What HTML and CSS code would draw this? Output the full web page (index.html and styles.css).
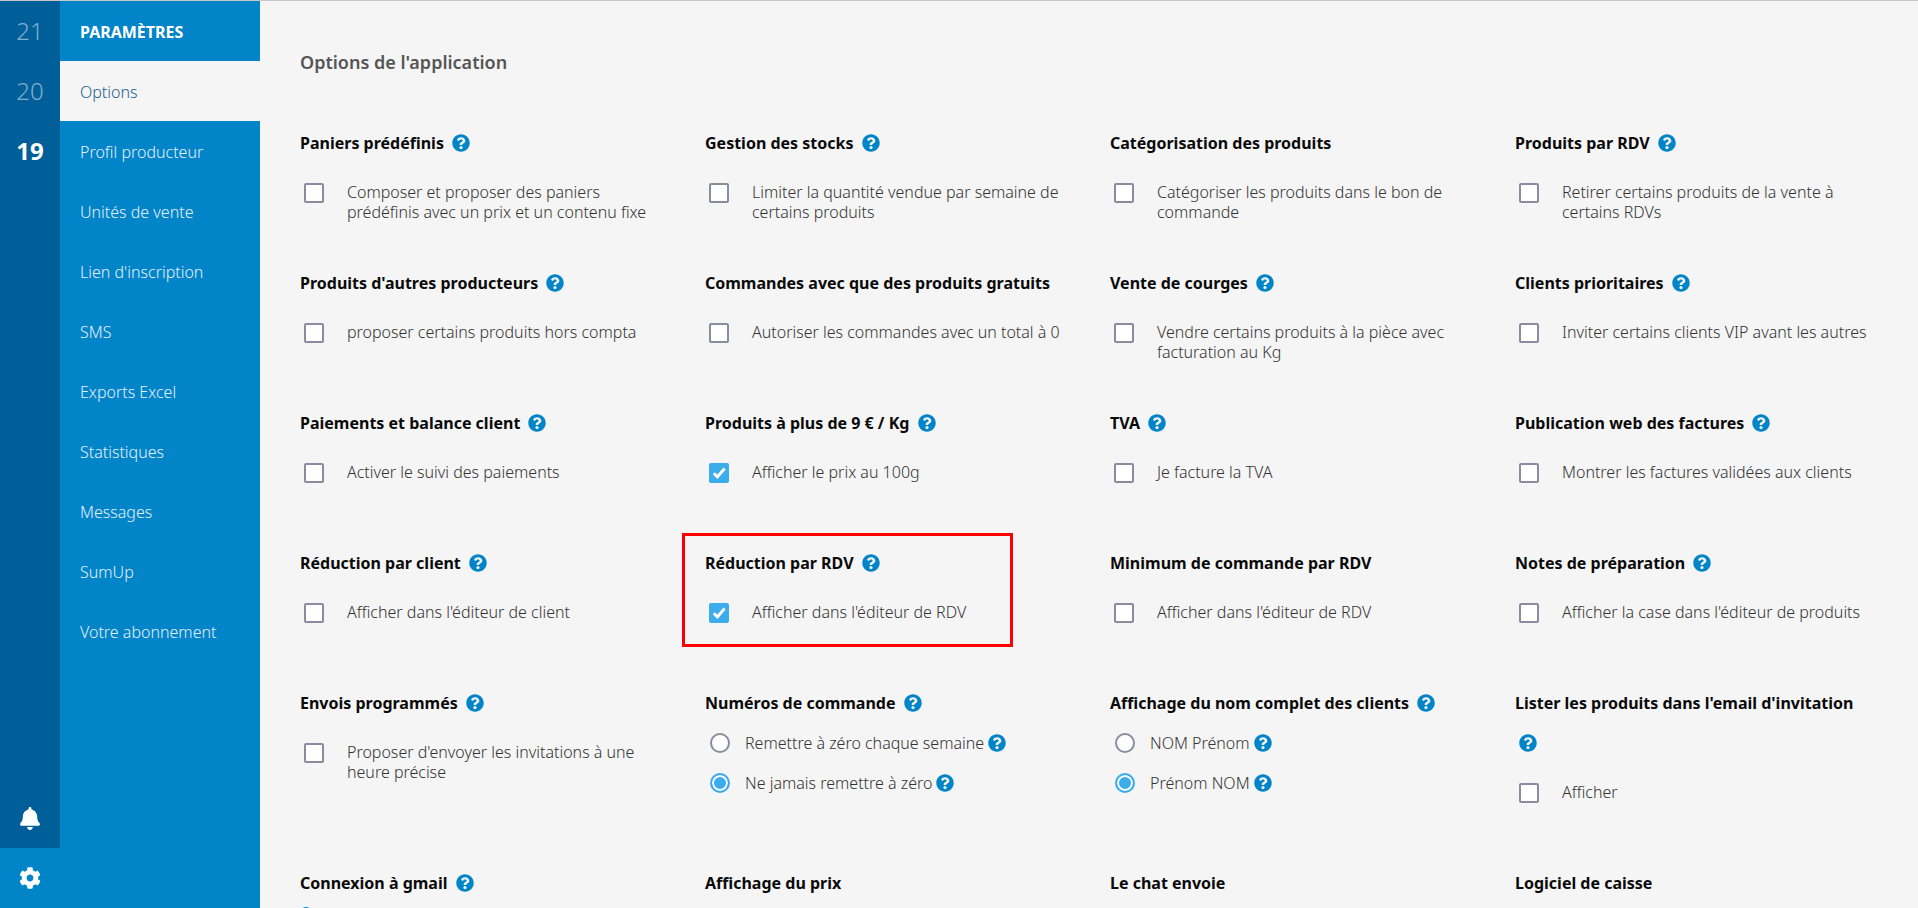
FILE: index.html
```html
<!DOCTYPE html>
<html lang="fr">
<head>
<meta charset="utf-8">
<title>Paramètres</title>
<link rel="stylesheet" href="styles.css">
</head>
<body>
<svg class="defs" width="0" height="0"><defs>
<symbol id="q" viewBox="0 0 512 512"><path fill="currentColor" d="M504 256c0 136.997-111.043 248-248 248S8 392.997 8 256C8 119.083 119.043 8 256 8s248 111.083 248 248zM262.655 90c-54.497 0-89.255 22.957-116.549 63.758-3.536 5.286-2.353 12.415 2.715 16.258l34.699 26.31c5.205 3.947 12.621 3.008 16.665-2.122 17.864-22.658 30.113-35.797 57.303-35.797 20.429 0 45.698 13.148 45.698 32.958 0 14.976-12.363 22.667-32.534 33.976C247.128 238.528 216 254.941 216 296v4c0 6.627 5.373 12 12 12h56c6.627 0 12-5.373 12-12v-1.333c0-28.462 83.186-29.647 83.186-106.667 0-58.002-60.165-102-116.531-102zM256 338c-25.365 0-46 20.635-46 46 0 25.364 20.635 46 46 46s46-20.636 46-46c0-25.365-20.635-46-46-46z"/></symbol>
</defs></svg>
<div class="app">
  <aside class="weeks">
    <div class="week">21</div>
    <div class="week">20</div>
    <div class="week current">19</div>
    <div class="spacer"></div>
    <div class="tool bell"><svg width="20" height="23" viewBox="0 0 448 512"><path fill="#fff" d="M224 512c35.320 0 63.970-28.650 63.970-64H160.030c0 35.350 28.650 64 63.970 64zm215.390-149.710c-19.320-20.760-55.470-51.990-55.470-154.290 0-77.700-54.480-139.900-127.940-155.160V32c0-17.670-14.320-32-31.980-32s-31.980 14.330-31.980 32v20.840C118.560 68.100 64.080 130.300 64.080 208c0 102.300-36.150 133.530-55.470 154.290-6 6.450-8.660 14.160-8.610 21.710.11 16.400 12.980 32 32.100 32h383.800c19.120 0 32-15.600 32.100-32 .05-7.550-2.610-15.270-8.610-21.710z"/></svg></div>
    <div class="tool gear"><svg width="22" height="22" viewBox="0 0 512 512"><path fill="#fff" d="M487.400 315.700l-42.600-24.600c4.300-23.200 4.300-47 0-70.200l42.600-24.600c4.900-2.800 7.100-8.600 5.500-14-11.100-35.600-30-67.800-54.700-94.600-3.800-4.100-10-5.100-14.800-2.300L380.800 110c-17.900-15.400-38.500-27.300-60.800-35.100V25.800c0-5.600-3.900-10.500-9.400-11.700-36.700-8.200-74.300-7.800-109.200 0-5.500 1.200-9.400 6.100-9.400 11.700V75c-22.200 7.900-42.800 19.800-60.800 35.100L88.700 85.500c-4.900-2.800-11-1.900-14.800 2.300-24.700 26.700-43.600 58.900-54.700 94.600-1.700 5.400.6 11.200 5.500 14L67.300 221c-4.300 23.200-4.300 47 0 70.200l-42.600 24.600c-4.900 2.800-7.100 8.600-5.500 14 11.100 35.600 30 67.800 54.700 94.600 3.800 4.100 10 5.100 14.800 2.300l42.600-24.600c17.900 15.400 38.500 27.300 60.800 35.100v49.200c0 5.600 3.900 10.500 9.400 11.700 36.700 8.200 74.300 7.800 109.200 0 5.500-1.200 9.400-6.100 9.400-11.700v-49.200c22.200-7.900 42.800-19.800 60.800-35.100l42.600 24.600c4.900 2.800 11 1.900 14.800-2.300 24.700-26.700 43.600-58.900 54.700-94.600 1.500-5.500-.7-11.300-5.600-14.100zM256 336c-44.100 0-80-35.900-80-80s35.900-80 80-80 80 35.900 80 80-35.900 80-80 80z"/></svg></div>
  </aside>
  <nav class="menu">
    <div class="menu-title">PARAMÈTRES</div>
    <a class="menu-item active">Options</a>
    <a class="menu-item">Profil producteur</a>
    <a class="menu-item">Unités de vente</a>
    <a class="menu-item">Lien d'inscription</a>
    <a class="menu-item">SMS</a>
    <a class="menu-item">Exports Excel</a>
    <a class="menu-item">Statistiques</a>
    <a class="menu-item">Messages</a>
    <a class="menu-item">SumUp</a>
    <a class="menu-item">Votre abonnement</a>
  </nav>
  <main class="content">
    <h1 class="page-title">Options de l'application</h1>
    <div class="grid">
      <section class="opt"><h2>Paniers prédéfinis <svg class="q"><use href="#q"/></svg></h2><label class="check"><i class="box"></i><span>Composer et proposer des paniers prédéfinis avec un prix et un contenu fixe</span></label></section>
      <section class="opt"><h2>Gestion des stocks <svg class="q"><use href="#q"/></svg></h2><label class="check"><i class="box"></i><span>Limiter la quantité vendue par semaine de certains produits</span></label></section>
      <section class="opt"><h2>Catégorisation des produits</h2><label class="check"><i class="box"></i><span>Catégoriser les produits dans le bon de commande</span></label></section>
      <section class="opt"><h2>Produits par RDV <svg class="q"><use href="#q"/></svg></h2><label class="check"><i class="box"></i><span>Retirer certains produits de la vente à certains RDVs</span></label></section>

      <section class="opt"><h2>Produits d'autres producteurs <svg class="q"><use href="#q"/></svg></h2><label class="check"><i class="box"></i><span>proposer certains produits hors compta</span></label></section>
      <section class="opt"><h2>Commandes avec que des produits gratuits</h2><label class="check"><i class="box"></i><span>Autoriser les commandes avec un total à 0</span></label></section>
      <section class="opt"><h2>Vente de courges <svg class="q"><use href="#q"/></svg></h2><label class="check"><i class="box"></i><span>Vendre certains produits à la pièce avec facturation au Kg</span></label></section>
      <section class="opt"><h2>Clients prioritaires <svg class="q"><use href="#q"/></svg></h2><label class="check"><i class="box"></i><span>Inviter certains clients VIP avant les autres</span></label></section>

      <section class="opt"><h2>Paiements et balance client <svg class="q"><use href="#q"/></svg></h2><label class="check"><i class="box"></i><span>Activer le suivi des paiements</span></label></section>
      <section class="opt"><h2>Produits à plus de 9 € / Kg <svg class="q"><use href="#q"/></svg></h2><label class="check"><i class="box on"><svg viewBox="0 0 20 20"><path d="M4.800 10.200l3.600 3.700 7.200-8.400" fill="none" stroke="#fff" stroke-width="3"/></svg></i><span>Afficher le prix au 100g</span></label></section>
      <section class="opt"><h2>TVA <svg class="q"><use href="#q"/></svg></h2><label class="check"><i class="box"></i><span>Je facture la TVA</span></label></section>
      <section class="opt"><h2>Publication web des factures <svg class="q"><use href="#q"/></svg></h2><label class="check"><i class="box"></i><span>Montrer les factures validées aux clients</span></label></section>

      <section class="opt"><h2>Réduction par client <svg class="q"><use href="#q"/></svg></h2><label class="check"><i class="box"></i><span>Afficher dans l'éditeur de client</span></label></section>
      <section class="opt highlighted"><h2>Réduction par RDV <svg class="q"><use href="#q"/></svg></h2><label class="check"><i class="box on"><svg viewBox="0 0 20 20"><path d="M4.800 10.200l3.600 3.700 7.200-8.400" fill="none" stroke="#fff" stroke-width="3"/></svg></i><span>Afficher dans l'éditeur de RDV</span></label></section>
      <section class="opt"><h2>Minimum de commande par RDV</h2><label class="check"><i class="box"></i><span>Afficher dans l'éditeur de RDV</span></label></section>
      <section class="opt"><h2>Notes de préparation <svg class="q"><use href="#q"/></svg></h2><label class="check"><i class="box"></i><span>Afficher la case dans l'éditeur de produits</span></label></section>

      <section class="opt"><h2>Envois programmés <svg class="q"><use href="#q"/></svg></h2><label class="check"><i class="box"></i><span>Proposer d'envoyer les invitations à une heure précise</span></label></section>
      <section class="opt"><h2 class="tight">Numéros de commande <svg class="q"><use href="#q"/></svg></h2><label class="radio"><i class="dot"></i><span>Remettre à zéro chaque semaine</span><svg class="q sm"><use href="#q"/></svg></label><label class="radio"><i class="dot on"></i><span>Ne jamais remettre à zéro</span><svg class="q sm"><use href="#q"/></svg></label></section>
      <section class="opt"><h2 class="tight">Affichage du nom complet des clients <svg class="q"><use href="#q"/></svg></h2><label class="radio"><i class="dot"></i><span>NOM Prénom</span><svg class="q sm"><use href="#q"/></svg></label><label class="radio"><i class="dot on"></i><span>Prénom NOM</span><svg class="q sm"><use href="#q"/></svg></label></section>
      <section class="opt"><h2>Lister les produits dans l'email d'invitation <svg class="q"><use href="#q"/></svg></h2><label class="check"><i class="box"></i><span>Afficher</span></label></section>

      <section class="opt"><h2 class="tight">Connexion à gmail <svg class="q"><use href="#q"/></svg></h2><i class="peek"></i></section>
      <section class="opt"><h2>Affichage du prix</h2></section>
      <section class="opt"><h2>Le chat envoie</h2></section>
      <section class="opt"><h2>Logiciel de caisse</h2></section>
    </div>
  </main>
</div>
</body>
</html>
```
FILE: styles.css
```css
* { box-sizing: border-box; }
html, body { margin: 0; height: 100%; overflow: hidden; }
body { font-family: "Noto Sans", "Open Sans", sans-serif; background: #f5f5f5; }
.defs { display: block; height: 0; }
.app { display: flex; height: 908px; border-top: 1px solid #c8c8c8; }
.weeks { width: 60px; flex: none; display: flex; flex-direction: column; background: #005f99; }
.week { height: 60px; padding-bottom: 2px; display: flex; align-items: center; justify-content: center; font-size: 24px; font-weight: 300; color: #7fb0cf; }
.week.current { color: #fff; font-weight: 700; }
.spacer { flex: 1; }
.tool { height: 60px; display: flex; align-items: center; justify-content: center; }
.gear { background: #0284c9; }
.menu { width: 200px; flex: none; background: #0284c9; }
.menu-title { height: 60px; padding: 2px 0 0 20px; display: flex; align-items: center; font-size: 16px; font-weight: 700; color: #fff; }
.menu-item { height: 60px; padding: 2px 0 0 20px; display: flex; align-items: center; font-size: 16px; font-weight: 300; color: #e3f1fa; }
.menu-item.active { background: #f5f5f5; color: #21608f; }
.content { flex: 1; min-width: 0; padding-left: 40px; }
.page-title { margin: 0; height: 122px; padding-top: 47px; font-size: 18px; line-height: 28px; font-weight: 600; color: #555; }
.grid { display: grid; grid-template-columns: repeat(4, 405px); grid-template-rows: 140px 140px 140px 140px 180px 140px; }
.opt { position: relative; padding-right: 47px; }
.opt h2 { margin: 0 0 19px; font-size: 16px; line-height: 40px; font-weight: 700; color: #0a0a0a; }
.opt h2.tight { margin-bottom: 0; }
.q { width: 18px; height: 18px; color: #0284c9; vertical-align: -3px; margin-left: 4px; }
.q.sm { margin-left: 4px; flex: none; }
.check { display: flex; align-items: flex-start; padding-left: 4px; font-size: 16px; line-height: 20px; font-weight: 300; color: #333; }
.check > span { margin-left: 23px; flex: 1; min-width: 0; }
.box { flex: none; width: 20px; height: 20px; border: 2px solid #8b8b9f; border-radius: 2px; background: #fff; display: block; margin-top: 1px; }
.box.on { background: #3caced; border-color: #3caced; }
.box svg { display: block; width: 20px; height: 20px; margin: -2px; }
.radio { display: flex; align-items: center; height: 40px; padding-left: 5px; font-size: 16px; font-weight: 300; color: #333; }
.radio > span { margin-left: 15px; }
.dot { flex: none; width: 20px; height: 20px; border-radius: 50%; border: 2px solid #8b8b9f; background: #fff; }
.dot.on { border-color: #3caced; background: #3caced; box-shadow: inset 0 0 0 2px #fff; }
.peek { display: block; width: 12px; height: 12px; margin-top: 4px; border-radius: 50%; background: #0284c9; }
.highlighted::after { content: ""; box-sizing: border-box; position: absolute; left: -23px; top: -10px; width: 331px; height: 114px; border: 3px solid #f00; pointer-events: none; }
```
